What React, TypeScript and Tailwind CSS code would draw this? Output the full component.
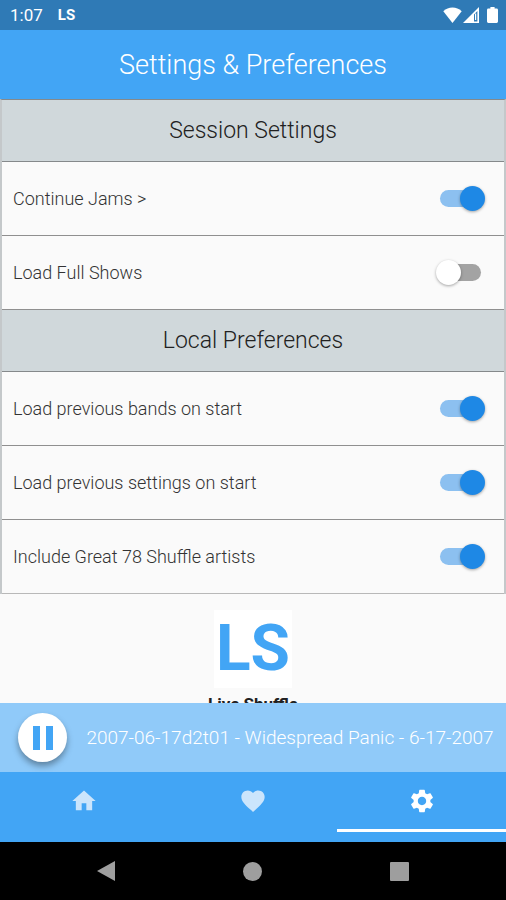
import { useState } from "react";

function StatusBar() {
  return (
    <div className="flex h-[30px] shrink-0 items-center bg-[#2f7ab6] pr-[8px] pl-[10px] text-white">
      <span className="text-[17px] leading-5">1:07</span>
      <span className="ml-[15px] text-[15px] leading-5 font-bold">LS</span>
      <div className="ml-auto flex items-center">
        <svg className="h-4 w-[19px]" viewBox="0 0 19 16" fill="currentColor" aria-hidden="true">
          <path d="M9.5 16 L0.3 4.2 C3 1.8 6 0.6 9.5 0.6 C13 0.6 16 1.8 18.7 4.2 Z" />
        </svg>
        <svg className="ml-[1px] h-4 w-4" viewBox="0 0 16 16" fill="currentColor" aria-hidden="true">
          <path fillRule="evenodd" d="M16 0 V16 H0 Z M11 7.4 V14.6 H14.4 V4 Z" />
          <path d="M12 6.5 H13.2 V13 H12 Z" />
        </svg>
        <svg className="ml-2 h-4 w-[11px]" viewBox="0 0 11 16" fill="currentColor" aria-hidden="true">
          <path d="M3.4 0 H7.6 V1.6 H9.6 Q11 1.6 11 3 V14.6 Q11 16 9.6 16 H1.4 Q0 16 0 14.6 V3 Q0 1.6 1.4 1.6 H3.4 Z" />
        </svg>
      </div>
    </div>
  );
}

function SectionTitle({ children }: { children: string }) {
  return (
    <h2 className="flex h-[62px] items-center justify-center border-b border-[#85898b] bg-[#d0d8db] text-[23px] leading-7 font-light text-[#212121]">
      {children}
    </h2>
  );
}

function SwitchRow({ label, initial }: { label: string; initial: boolean }) {
  const [on, setOn] = useState(initial);
  return (
    <label className="flex min-h-[74px] items-center justify-between border-b border-[#8f8f8f] pr-[23px] pl-[11px] text-[18px] leading-6 font-light text-[#333333] last:border-[#b8b8b8]">
      <span>{label}</span>
      <input
        type="checkbox"
        role="switch"
        checked={on}
        onChange={(e) => setOn(e.target.checked)}
        className="h-[17px] w-[41px] shrink-0 appearance-none rounded-full bg-[#a3a3a3] before:block before:size-[25px] before:-translate-x-1 before:-translate-y-1 before:rounded-full before:bg-white before:shadow-[0_1px_3px_rgba(0,0,0,0.35)] checked:bg-[#8cc0f0] checked:before:translate-x-5 checked:before:bg-[#1e88e5]"
      />
    </label>
  );
}

function Player() {
  return (
    <div className="flex h-[69px] shrink-0 items-center bg-[#90caf9] pr-[7px] pl-[18px]">
      <button
        aria-label="Pause"
        className="flex size-[49px] shrink-0 items-center justify-center rounded-full bg-white text-[#42a5f5] shadow-[0_4px_6px_rgba(0,0,0,0.35)]"
      >
        <svg className="h-6 w-5" viewBox="0 0 20 24" fill="currentColor" aria-hidden="true">
          <path d="M0 0 H7 V24 H0 Z M13 0 H20 V24 H13 Z" />
        </svg>
      </button>
      <div className="ml-[14px] flex min-w-0 flex-1 justify-center overflow-hidden">
        <span className="text-[19px] leading-6 font-light whitespace-nowrap text-white">
          2007-06-17d2t01 - Widespread Panic - 6-17-2007
        </span>
      </div>
    </div>
  );
}

const tabs = [
  { name: "Home", path: "M10 20v-6h4v6h5v-8h3L12 3 2 12h3v8z" },
  {
    name: "Favorites",
    path: "M12 21.35l-1.45-1.32C5.4 15.36 2 12.28 2 8.5 2 5.42 4.42 3 7.5 3c1.74 0 3.41.81 4.5 2.09C13.09 3.81 14.76 3 16.5 3 19.58 3 22 5.42 22 8.5c0 3.78-3.4 6.86-8.55 11.54L12 21.35z",
  },
  {
    name: "Settings",
    path: "M19.14 12.94c.04-.3.06-.61.06-.94 0-.32-.02-.64-.07-.94l2.03-1.58c.18-.14.23-.41.12-.61l-1.92-3.32c-.12-.22-.37-.29-.59-.22l-2.39.96c-.5-.38-1.03-.7-1.62-.94l-.36-2.54c-.04-.24-.24-.41-.48-.41h-3.84c-.24 0-.43.17-.47.41l-.36 2.54c-.59.24-1.13.57-1.62.94l-2.39-.96c-.22-.08-.47 0-.59.22L2.74 8.87c-.12.21-.08.47.12.61l2.03 1.58c-.05.3-.09.63-.09.94s.02.64.07.94l-2.03 1.58c-.18.14-.23.41-.12.61l1.92 3.32c.12.22.37.29.59.22l2.39-.96c.5.38 1.03.7 1.62.94l.36 2.54c.05.24.24.41.48.41h3.84c.24 0 .44-.17.47-.41l.36-2.54c.59-.24 1.13-.56 1.62-.94l2.39.96c.22.08.47 0 .59-.22l1.92-3.32c.12-.22.07-.47-.12-.61l-2.01-1.58zM12 15.6c-1.98 0-3.6-1.62-3.6-3.6s1.62-3.6 3.6-3.6 3.6 1.62 3.6 3.6-1.62 3.6-3.6 3.6z",
  },
];

function TabBar() {
  const [active, setActive] = useState("Settings");
  return (
    <nav className="grid h-[70px] shrink-0 grid-cols-3 bg-[#42a5f5]">
      {tabs.map((tab) => (
        <button
          key={tab.name}
          aria-label={tab.name}
          aria-current={tab.name === active ? "page" : undefined}
          onClick={() => setActive(tab.name)}
          className="mb-[10px] flex items-center justify-center border-b-[3px] border-transparent text-[#cbe5fc] aria-[current=page]:border-white aria-[current=page]:text-white"
        >
          <svg className="size-7" viewBox="0 0 24 24" fill="currentColor" aria-hidden="true">
            <path d={tab.path} />
          </svg>
        </button>
      ))}
    </nav>
  );
}

function SystemBar() {
  return (
    <div className="flex h-[58px] shrink-0 justify-center bg-black text-[#9e9e9e]">
      <div className="grid w-[87%] grid-cols-3">
        <button aria-label="Back" className="flex items-center justify-center">
          <svg className="size-5" viewBox="0 0 20 20" fill="currentColor" aria-hidden="true">
            <path d="M1 10 L19 0 V20 Z" />
          </svg>
        </button>
        <button aria-label="Home" className="flex items-center justify-center">
          <span className="size-[19px] rounded-full bg-current" />
        </button>
        <button aria-label="Recent apps" className="flex items-center justify-center">
          <span className="size-[19px] rounded-[1px] bg-current" />
        </button>
      </div>
    </div>
  );
}

export default function App() {
  return (
    <div className="flex h-screen flex-col bg-[#fafafa] font-[Roboto,sans-serif]">
      <StatusBar />
      <header className="flex h-[69px] shrink-0 items-center justify-center bg-[#42a5f5]">
        <h1 className="text-[27px] leading-8 font-light text-white">Settings &amp; Preferences</h1>
      </header>
      <main className="min-h-0 flex-1 overflow-hidden">
        <div className="border-x-2 border-t border-x-[#c4c8ca] border-t-[#85898b]">
          <SectionTitle>Session Settings</SectionTitle>
          <SwitchRow label="Continue Jams &gt;" initial={true} />
          <SwitchRow label="Load Full Shows" initial={false} />
          <SectionTitle>Local Preferences</SectionTitle>
          <SwitchRow label="Load previous bands on start" initial={true} />
          <SwitchRow label="Load previous settings on start" initial={true} />
          <SwitchRow label="Include Great 78 Shuffle artists" initial={true} />
        </div>
        <div className="flex flex-col items-center pt-4">
          <div className="flex size-[78px] items-center justify-center bg-white text-[64px] leading-none font-bold text-[#42a5f5]">
            LS
          </div>
          <p className="mt-1 text-[17px] leading-6 font-bold text-[#212121]">Live Shuffle</p>
        </div>
      </main>
      <Player />
      <TabBar />
      <SystemBar />
    </div>
  );
}
